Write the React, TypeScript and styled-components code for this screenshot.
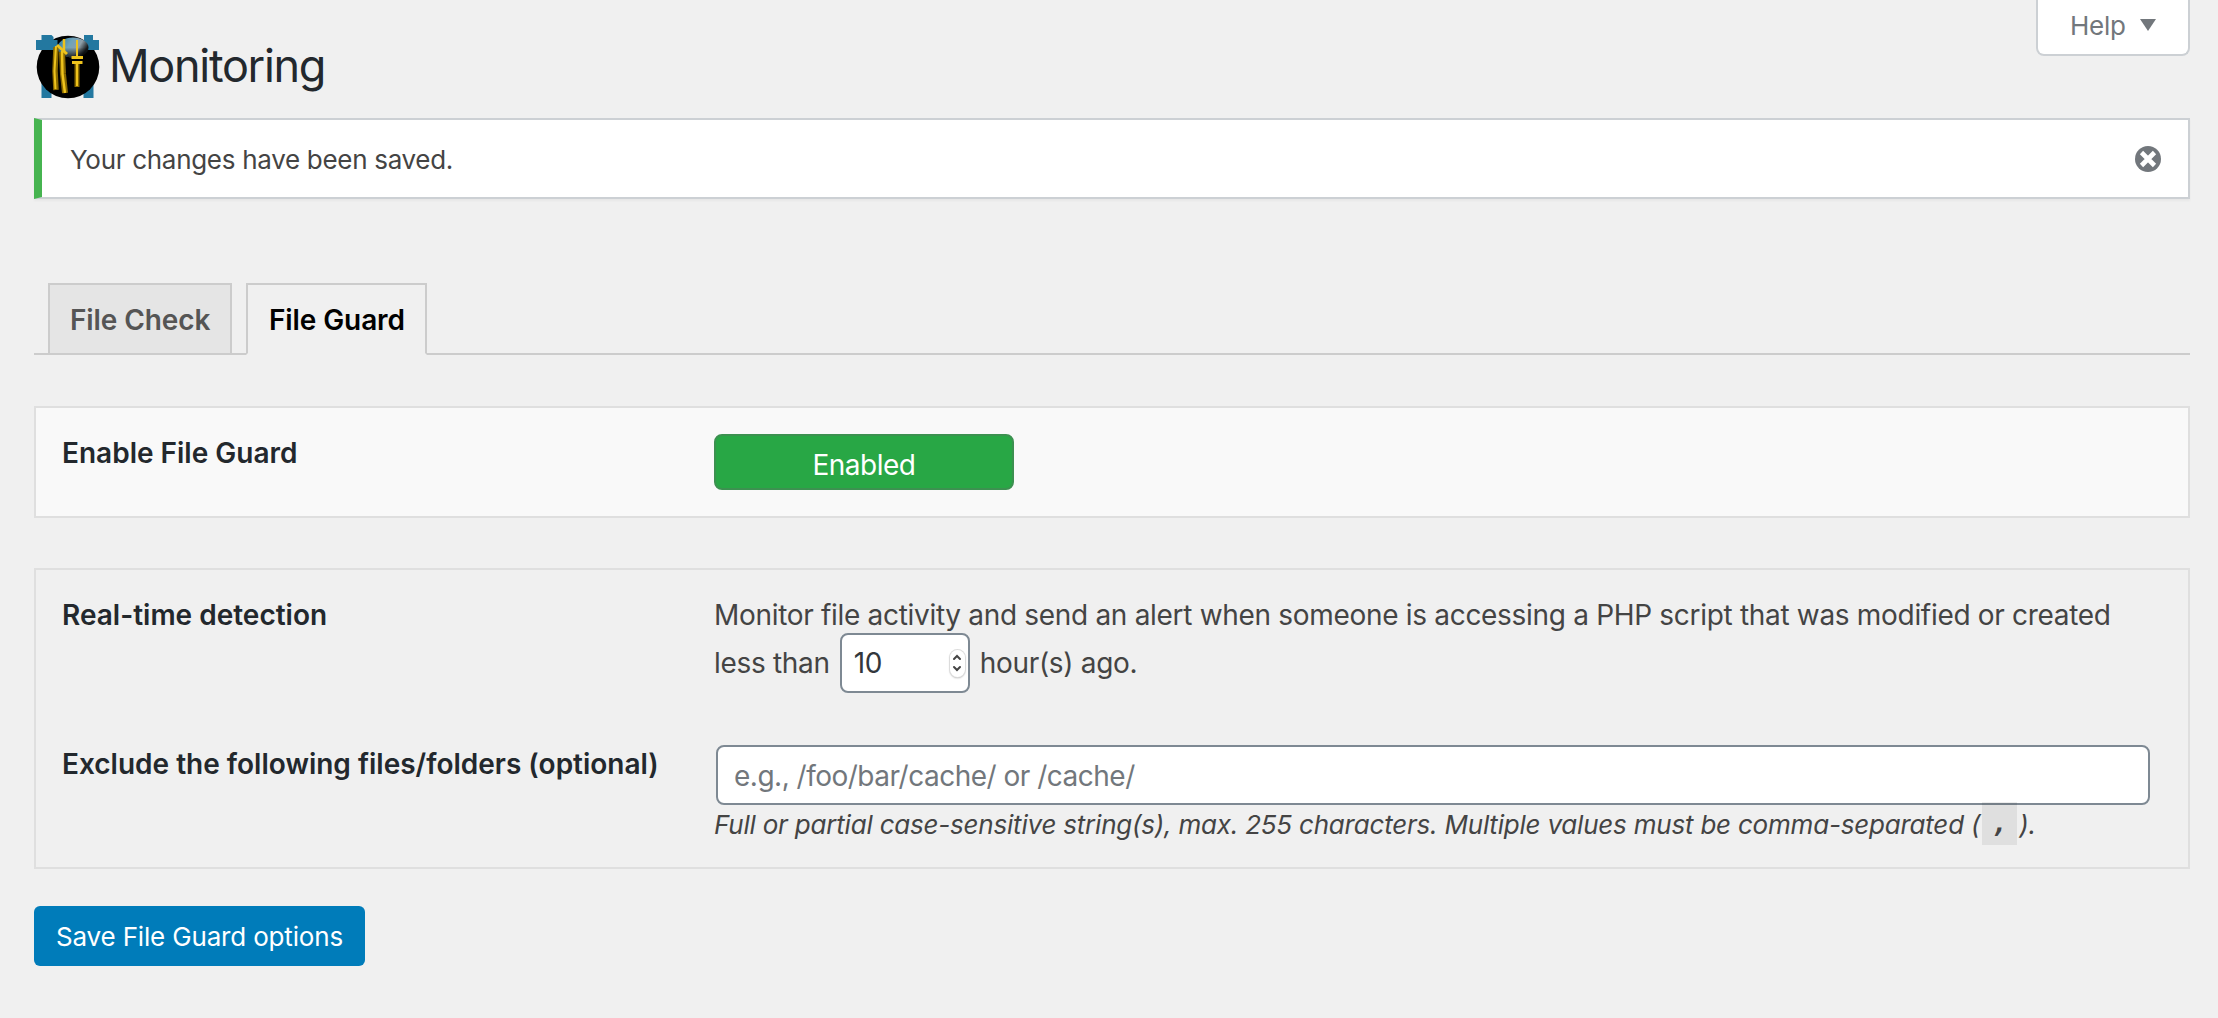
import React from 'react';
import styled, { createGlobalStyle } from 'styled-components';

const Global = createGlobalStyle`
  * { box-sizing: border-box; }
  body { margin: 0; background: #f0f0f0; color: #444; font-family: Inter, "Liberation Sans", sans-serif; font-size: 26px; }
  input, button { font-family: inherit; }
`;

const Page = styled.main`
  width: 2218px;
  height: 1018px;
  padding: 0 28px 0 34px;
  display: flex;
  flex-direction: column;
  align-items: stretch;
`;

const Header = styled.header`
  height: 118px;
  display: flex;
  justify-content: space-between;
  align-items: flex-start;
`;

const Brand = styled.div`
  display: flex;
  gap: 6px;
  padding-top: 35px;
`;

const LogoArt = styled.svg`
  width: 69px;
  height: 64px;
  overflow: visible;
  filter: blur(0.6px);
`;

const Title = styled.h1`
  margin: 0;
  font-size: 45px;
  line-height: 62px;
  font-weight: 400;
  letter-spacing: -1.3px;
  color: #23282d;
  white-space: nowrap;
`;

const HelpButton = styled.button`
  display: flex;
  align-items: center;
  gap: 14px;
  width: 154px;
  height: 56px;
  padding: 0 0 4px 32px;
  border: 2px solid #ccd0d4;
  border-top: 0;
  border-radius: 0 0 8px 8px;
  background: #fff;
  color: #72777c;
  font-size: 26px;
  letter-spacing: -0.3px;
`;

const Notice = styled.div`
  height: 81px;
  display: flex;
  align-items: center;
  justify-content: space-between;
  padding: 0 27px 0 28px;
  border: 2px solid #ccd0d4;
  border-left: 8px solid #46b450;
  background: #fff;
  box-shadow: 0 2px 2px rgba(0, 0, 0, 0.04);
`;

const NoticeText = styled.p`
  margin: 0;
  padding-top: 2px;
  line-height: 39px;
  letter-spacing: -0.3px;
  white-space: nowrap;
`;

const Tabs = styled.nav`
  display: flex;
  gap: 14px;
  margin-top: 84px;
  height: 72px;
  padding-left: 14px;
  border-bottom: 2px solid #ccc;
`;

const Tab = styled.a<{ $active?: boolean; $width: number }>`
  width: ${p => p.$width}px;
  height: ${p => (p.$active ? 72 : 70)}px;
  padding-left: ${p => (p.$active ? 21 : 20)}px;
  border: 2px solid #ccc;
  border-bottom: ${p => (p.$active ? '2px solid #f0f0f0' : '0')};
  background: ${p => (p.$active ? '#f0f0f0' : '#e5e5e5')};
  color: ${p => (p.$active ? '#000' : '#555')};
  font-size: 28px;
  font-weight: 600;
  line-height: 71px;
  letter-spacing: -0.1px;
  white-space: nowrap;
`;

const Panel = styled.section<{ $light?: boolean; $top: number; $height: number }>`
  margin-top: ${p => p.$top}px;
  height: ${p => p.$height}px;
  border: 2px solid #dfdfdf;
  background: ${p => (p.$light ? '#f9f9f9' : 'transparent')};
  padding: 26px 38px 0 26px;
`;

const Row = styled.div<{ $height?: number }>`
  display: grid;
  grid-template-columns: 652px 1fr;
  height: ${p => (p.$height ? `${p.$height}px` : 'auto')};
`;

const Label = styled.div`
  font-size: 28px;
  font-weight: 600;
  line-height: 38px;
  letter-spacing: 0;
  color: #23282d;
  white-space: nowrap;
`;

const Toggle = styled.button`
  width: 300px;
  height: 56px;
  padding: 5px 0 0;
  border: 2px solid #3c9150;
  border-radius: 8px;
  background: #28a745;
  color: #fff;
  font-size: 28px;
  letter-spacing: -0.5px;
`;

const Sentence = styled.div`
  margin-top: -1px;
  font-size: 28px;
  line-height: 40px;
  letter-spacing: -0.31px;
  white-space: nowrap;
`;

const InlineLine = styled.div`
  display: flex;
  align-items: center;
  height: 60px;
  margin-top: -2px;
`;

const NumberField = styled.span`
  display: inline-flex;
  align-items: center;
  justify-content: space-between;
  width: 130px;
  height: 60px;
  margin: 0 10px 0 10px;
  padding: 0 3px 0 12px;
  border: 2px solid #7e8993;
  border-radius: 8px;
  background: #fff;
  color: #32373c;
`;

const Stepper = styled.span`
  display: grid;
  place-items: center;
  width: 15px;
  height: 27px;
  border-radius: 8px;
  background: #fff;
  box-shadow: 0 0 0 1px #dcdcdc, 0 1px 2px rgba(0, 0, 0, 0.35);
`;

const FieldColumn = styled.div`
  display: flex;
  flex-direction: column;
`;

const TextField = styled.input`
  width: 1434px;
  height: 60px;
  margin-left: 2px;
  padding: 2px 16px 0;
  border: 2px solid #7e8993;
  border-radius: 8px;
  background: #fff;
  font-size: 28px;
  letter-spacing: -0.5px;
  &::placeholder { color: #72777c; opacity: 1; }
`;

const Hint = styled.p`
  display: flex;
  align-items: center;
  margin: -3px 0 0;
  height: 43px;
  font-size: 26px;
  font-style: italic;
  line-height: 41px;
  letter-spacing: -0.21px;
  white-space: nowrap;
  span { padding-top: 2px; }
`;

const Code = styled.code`
  width: 35px;
  height: 43px;
  margin: 0 2px;
  background: rgba(0, 0, 0, 0.07);
  font-family: "DejaVu Sans Mono", monospace;
  font-size: 26px;
  font-weight: 700;
  line-height: 43px;
  text-align: center;
`;

const Save = styled.button`
  align-self: flex-start;
  width: 331px;
  height: 60px;
  margin-top: 37px;
  padding: 1px 0 0;
  border: 0;
  border-radius: 6px;
  background: #007cba;
  color: #fff;
  font-size: 26px;
  letter-spacing: -0.17px;
  white-space: nowrap;
`;

const Logo = () => (
  <LogoArt viewBox="0 0 69 64">
    <defs>
      <linearGradient id="sheen" x1="0" y1="0" x2="1" y2="0.4">
        <stop offset="0" stopColor="#2378a0" />
        <stop offset="0.45" stopColor="#6ea3bb" />
        <stop offset="0.75" stopColor="#8f9fa8" />
        <stop offset="1" stopColor="#15191b" />
      </linearGradient>
      <linearGradient id="fade" x1="0" y1="0" x2="0" y2="1">
        <stop offset="0.5" stopColor="#000" stopOpacity="0" />
        <stop offset="1" stopColor="#000" stopOpacity="0.8" />
      </linearGradient>
    </defs>
    <path d="M7.500 38h10v25h-10zM49.500 38h10v25h-10z" fill="#2378a0" />
    <circle cx="34" cy="32" r="31.300" fill="#000" />
    <path d="M7.500 0h10l2 2v3h4v10H2V5h5.500zM50 0h9v5h6v10H52l-5-7 3-3z" fill="#2378a0" />
    <ellipse cx="39" cy="12.500" rx="15.500" ry="10" fill="url(#sheen)" />
    <ellipse cx="39" cy="12.500" rx="15.500" ry="10" fill="url(#fade)" />
    <g fill="none" stroke="#8a6a00" strokeLinejoin="round">
      <path d="M22 12l-1 24 1 19" strokeWidth="5.500" />
      <path d="M28 17l1 22 2 19" strokeWidth="6" />
      <path d="M43 29v23" strokeWidth="5" />
    </g>
    <g fill="none" stroke="#eec31d" strokeLinejoin="round">
      <path d="M23 10l10 9" strokeWidth="3" />
      <path d="M30 4v12" strokeWidth="2.500" />
      <path d="M22 11l-1.500 25 1 18" strokeWidth="2" />
      <path d="M28 16l.5 23 2.500 19" strokeWidth="2.400" />
      <path d="M43 5v17M43 29v22" strokeWidth="2" />
      <path d="M37.500 22.500H49M38 27.500h10.500" strokeWidth="3" />
    </g>
  </LogoArt>
);

const App = () => (
  <>
    <Global />
    <Page>
      <Header>
        <Brand>
          <Logo />
          <Title>Monitoring</Title>
        </Brand>
        <HelpButton>
          Help
          <svg width="16" height="12" viewBox="0 0 16 12"><path d="M0 0h16L8 12z" fill="#72777c" /></svg>
        </HelpButton>
      </Header>
      <Notice>
        <NoticeText>Your changes have been saved.</NoticeText>
        <svg width="26" height="26" viewBox="0 0 26 26">
          <circle cx="13" cy="13" r="13" fill="#72777c" />
          <path d="M6.500 6.500l13 13M19.500 6.500l-13 13" stroke="#fff" strokeWidth="4.600" />
        </svg>
      </Notice>
      <Tabs>
        <Tab $width={184}>File Check</Tab>
        <Tab $width={181} $active>File Guard</Tab>
      </Tabs>
      <Panel $light $top={51} $height={112}>
        <Row>
          <Label>Enable File Guard</Label>
          <Toggle>Enabled</Toggle>
        </Row>
      </Panel>
      <Panel $top={50} $height={301}>
        <Row $height={149}>
          <Label>Real-time detection</Label>
          <Sentence>
            Monitor file activity and send an alert when someone is accessing a PHP script that was modified or created
            <InlineLine>
              <span>less than</span>
              <NumberField>
                10
                <Stepper>
                  <svg width="10" height="18" viewBox="0 0 10 18" fill="none" stroke="#444" strokeWidth="2" strokeLinecap="round">
                    <path d="M2 5l3-3 3 3M2 13l3 3 3-3" />
                  </svg>
                </Stepper>
              </NumberField>
              <span>hour(s) ago.</span>
            </InlineLine>
          </Sentence>
        </Row>
        <Row>
          <Label>Exclude the following files/folders (optional)</Label>
          <FieldColumn>
            <TextField placeholder="e.g., /foo/bar/cache/ or /cache/" />
            <Hint>
              <span>Full or partial case-sensitive string(s), max. 255 characters. Multiple values must be comma-separated (</span>
              <Code>,</Code>
              <span>).</span>
            </Hint>
          </FieldColumn>
        </Row>
      </Panel>
      <Save>Save File Guard options</Save>
    </Page>
  </>
);

export default App;
